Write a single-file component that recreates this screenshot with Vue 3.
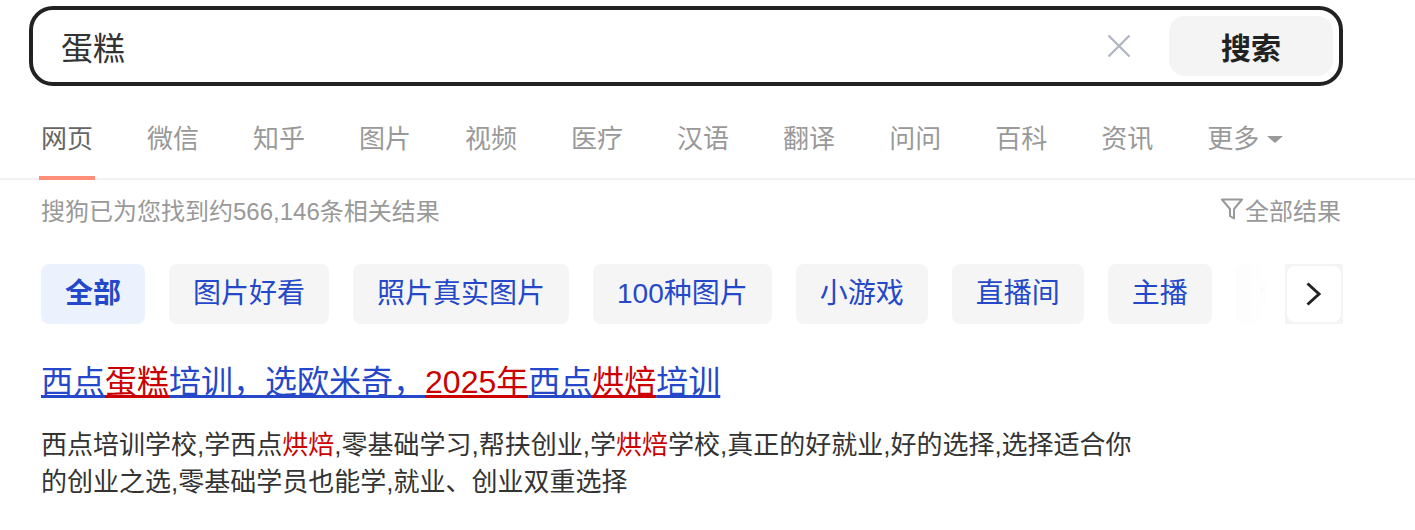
<script setup>
const tabs = ['网页','微信','知乎','图片','视频','医疗','汉语','翻译','问问','百科','资讯']
const chips = ['全部','图片好看','照片真实图片','100种图片','小游戏','直播间','主播','借贷平台']
</script>

<template>
  <div class="page">
    <div class="search">
      <span class="query">蛋糕</span>
      <svg class="clear" width="24" height="24" viewBox="0 0 24 24"><path d="M1.5 1.5 22.5 22.5M22.5 1.5 1.5 22.5" stroke="#aeb4c0" stroke-width="2.2" fill="none"/></svg>
      <button class="submit">搜索</button>
    </div>
    <nav class="tabs">
      <a v-for="(t, i) in tabs" :key="t" class="tab" :class="{ active: i === 0 }">{{ t }}</a>
      <a class="tab more">更多<i class="caret"></i></a>
    </nav>
    <div class="stats">
      <span>搜狗已为您找到约566,146条相关结果</span>
      <span class="filter">
        <svg width="22" height="22" viewBox="0 0 22 22"><path d="M1 1.500H21L13 11V20.500L9 18V11Z" stroke="#999" stroke-width="2" fill="none" stroke-linejoin="round"/></svg>全部结果
      </span>
    </div>
    <div class="chip-bar">
      <div class="chips">
        <span v-for="(c, i) in chips" :key="c" class="chip" :class="{ current: i === 0 }">{{ c }}</span>
      </div>
      <div class="fade"></div>
      <button class="next">
        <span class="next-face">
          <svg width="18" height="26" viewBox="0 0 18 26"><path d="M2.500 2.500 14 13 2.500 23.500" stroke="#222" stroke-width="3" fill="none"/></svg>
        </span>
      </button>
    </div>
    <h3 class="title"><a>西点<em>蛋糕</em>培训，选欧米奇，<em>2025年</em>西点<em>烘焙</em>培训</a></h3>
    <p class="desc">西点培训学校,学西点<em>烘焙</em>,零基础学习,帮扶创业,学<em>烘焙</em>学校,真正的好就业,好的选择,选择适合你的创业之选,零基础学员也能学,就业、创业双重选择</p>
  </div>
</template>

<style>
html, body { background: #fff; }
</style>

<style scoped>
.page {
  height: 530px;
  overflow: hidden;
  box-sizing: border-box;
  padding-top: 6px;
  font-family: "Liberation Sans", "Noto Sans CJK SC", sans-serif;
  color: #222;
}
.search {
  box-sizing: border-box;
  width: 1314px;
  height: 80px;
  margin-left: 29px;
  border: 4px solid #222;
  border-radius: 24px;
  display: flex;
  align-items: center;
  padding: 0 6px 0 28px;
}
.query { flex: 1; font-size: 32px; color: #333; }
.clear { margin-right: 38px; }
.submit {
  width: 164px;
  height: 60px;
  border: 0;
  border-radius: 16px;
  background: #f4f4f5;
  color: #222;
  font: bold 30px "Liberation Sans", "Noto Sans CJK SC", sans-serif;
}
.tabs {
  height: 94px;
  box-sizing: border-box;
  border-bottom: 2px solid #f2f2f2;
  padding-left: 41px;
  display: flex;
  gap: 54px;
}
.tab {
  position: relative;
  font-size: 26px;
  line-height: 36px;
  padding-top: 35px;
  color: #999;
  display: flex;
  align-items: flex-start;
}
.tab.active { color: #666; }
.tab.active::after {
  content: "";
  position: absolute;
  left: -2px;
  right: -2px;
  bottom: -2px;
  height: 4px;
  background: #ff8f7a;
}
.caret {
  width: 0;
  height: 0;
  margin: 15px 0 0 8px;
  border: 8px solid transparent;
  border-top: 7px solid #999;
  border-bottom: 0;
}
.stats {
  width: 1300px;
  margin: 11px 0 0 41px;
  height: 36px;
  display: flex;
  justify-content: space-between;
  align-items: center;
  font-size: 24px;
  color: #999;
}
.filter { display: flex; align-items: center; gap: 2px; }
.filter svg { margin-left: -2px; }
.chip-bar {
  position: relative;
  width: 1302px;
  height: 60px;
  margin: 37px 0 0 41px;
}
.chips { display: flex; gap: 24px; overflow: hidden; height: 60px; width: 1244px; }
.chip {
  flex: none;
  padding: 0 24px;
  line-height: 60px;
  border-radius: 8px;
  background: #f5f5f6;
  font-size: 28px;
  color: #2448c9;
}
.chip.current { background: #ebf2fd; font-weight: bold; }
.fade {
  position: absolute;
  left: 1180px;
  top: 0;
  width: 64px;
  height: 60px;
  background: linear-gradient(to right, rgba(255,255,255,.6), rgba(255,255,255,.88) 50%, #fff 70%);
}
.next {
  position: absolute;
  right: 0;
  top: 0;
  box-sizing: border-box;
  width: 58px;
  height: 60px;
  background: #f4f4f4;
  border: 0;
  padding: 2px;
  display: flex;
}
.next-face {
  flex: 1;
  background: #fff;
  border-radius: 8px;
  display: flex;
  align-items: center;
  justify-content: center;
}
.title {
  margin: 33px 0 0 41px;
  font-size: 32px;
  font-weight: normal;
  line-height: 50px;
}
.title a,
.title em {
  color: #2448c9;
  text-decoration: underline;
  text-decoration-thickness: 3px;
  text-decoration-skip-ink: none;
}
.title em { color: #c00; text-decoration-color: #c00; }
em { font-style: normal; color: #c00; }
.desc {
  width: 1100px;
  margin: 20px 0 0 41px;
  font-size: 26px;
  line-height: 37px;
  color: #333;
}
</style>
